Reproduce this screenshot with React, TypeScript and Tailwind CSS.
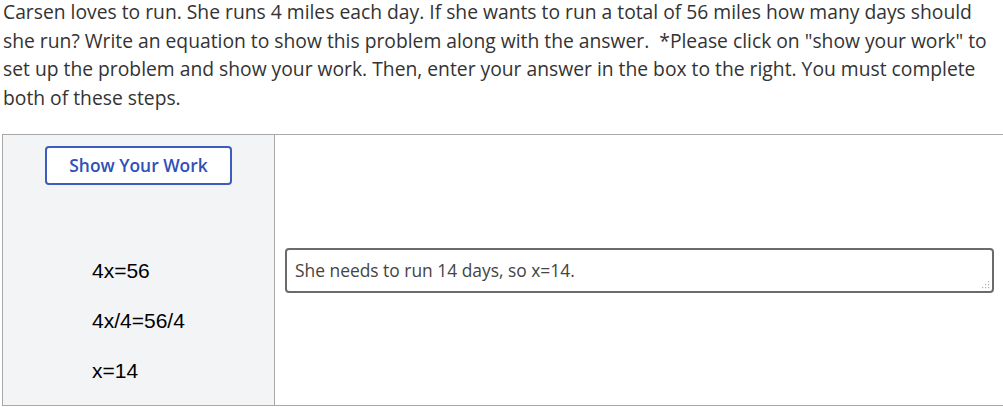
import React from 'react'

export default function App() {
  return (
    <div className="flow-root w-[1003px] h-[407px] bg-white" style={{ fontFamily: '"Open Sans", sans-serif' }}>
      <p className="px-[3px] text-[19.3px] leading-[28.7px] text-[#333]" style={{ marginTop: '-2px' }}>
        Carsen loves to run. She runs 4 miles each day. If she wants to run a total of 56 miles how many days should she run? Write an equation to show this problem along with the answer.&nbsp; *Please click on "show your work" to set up the problem and show your work. Then, enter your answer in the box to the right. You must complete both of these steps.
      </p>

      <div className="mt-[21px] ml-[2px] flex h-[272px] border-t border-b border-l border-[#a8a8a8]">
        {/* work column */}
        <div className="flex w-[272px] shrink-0 flex-col border-r border-[#a8a8a8] bg-[#f3f4f6]">
          <div className="pl-[42px] pt-[11px]">
            <button className="h-[39px] w-[187px] rounded-[4px] border-2 border-[#3c5cc0] bg-white text-[17.4px] font-semibold text-[#2f50b8]">
              Show Your Work
            </button>
          </div>
          <div className="mt-[74px] flex flex-col gap-[26px] pl-[89px] text-[21px] leading-[24px] text-black" style={{ fontFamily: '"Liberation Sans", Arial, sans-serif' }}>
            <div>4x=56</div>
            <div>4x/4=56/4</div>
            <div>x=14</div>
          </div>
        </div>

        {/* answer column */}
        <div className="flex-1 pl-[10px] pt-[113px] pr-[8px]">
          <div className="relative h-[45px] w-[709px] rounded-[4px] border-2 border-[#6b6b6b] bg-white px-[8px] pt-[8px] text-[17.4px] leading-[24px] text-[#444]">
            She needs to run 14 days, so x=14.
            <svg className="absolute bottom-[2px] right-[2px]" width="8" height="8" viewBox="0 0 8 8">
              <g fill="#b0b0b0">
                <rect x="6" y="0" width="1.2" height="1.2" />
                <rect x="3" y="3" width="1.2" height="1.2" />
                <rect x="6" y="3" width="1.2" height="1.2" />
                <rect x="0" y="6" width="1.2" height="1.2" />
                <rect x="3" y="6" width="1.2" height="1.2" />
                <rect x="6" y="6" width="1.2" height="1.2" />
              </g>
            </svg>
          </div>
        </div>
      </div>
    </div>
  )
}
